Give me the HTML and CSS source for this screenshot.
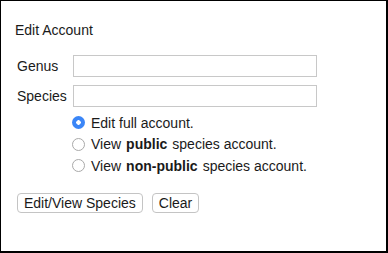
FILE: index.html
```html
<!DOCTYPE html>
<html lang="en">
<head>
  <meta charset="UTF-8">
  <title>Edit Account</title>
  <link rel="stylesheet" href="styles.css">
</head>
<body>
  <div class="panel">
    <h1 class="title">Edit Account</h1>
    <form class="account-form">
      <div class="field">
        <label for="genus">Genus</label>
        <input type="text" id="genus">
      </div>
      <div class="field">
        <label for="species">Species</label>
        <input type="text" id="species">
      </div>
      <div class="options">
        <label class="option"><input type="radio" name="mode" checked> Edit full account.</label>
        <label class="option"><input type="radio" name="mode"> View <b>public</b> species account.</label>
        <label class="option"><input type="radio" name="mode"> View <b>non-public</b> species account.</label>
      </div>
      <div class="actions">
        <button type="button" class="btn">Edit/View Species</button>
        <button type="reset" class="btn">Clear</button>
      </div>
    </form>
  </div>
</body>
</html>
```

FILE: styles.css
```css
html, body {
  margin: 0;
  background: #fff;
}

body {
  font-family: 'Liberation Sans', Arial, sans-serif;
  font-size: 14px;
  color: #1a1a1a;
}

.panel {
  box-sizing: border-box;
  width: 388px;
  height: 253px;
  border-style: solid;
  border-color: #000;
  border-width: 1px 2px 2px 1px;
  padding: 21px 0 0 14px;
}

.title {
  margin: 0;
  font-size: 14px;
  font-weight: normal;
  line-height: 16px;
}

.account-form {
  margin-top: 17px;
  padding-left: 2px;
}

.field {
  display: flex;
  align-items: center;
  height: 22px;
  margin-bottom: 8px;
}

.field label {
  width: 56px;
}

.field input {
  box-sizing: border-box;
  width: 244px;
  height: 22px;
  margin: 0;
  border: 1px solid #c8c8c8;
  padding: 2px 4px;
  font: inherit;
}

.options {
  display: flex;
  flex-direction: column;
  padding-left: 55px;
  margin-top: -3px;
}

.option {
  display: flex;
  align-items: center;
  height: 21.5px;
  gap: 6px;
}

.option input {
  appearance: none;
  -webkit-appearance: none;
  box-sizing: border-box;
  width: 13px;
  height: 13px;
  margin: 0;
  border: 1px solid #a9a9a9;
  border-radius: 50%;
  background: #fff;
}

.option input:checked {
  border: none;
  background: radial-gradient(circle, #fff 0 2px, #3b86f7 2.5px);
}

.option b {
  margin: 0 -1px;
}

.actions {
  display: flex;
  gap: 9px;
  margin-top: 16px;
}

.btn {
  height: 20px;
  padding: 0 6px;
  margin: 0;
  border: 1px solid #c4c4c4;
  border-radius: 4px;
  background: #fff;
  font: inherit;
  color: #1a1a1a;
}
```
